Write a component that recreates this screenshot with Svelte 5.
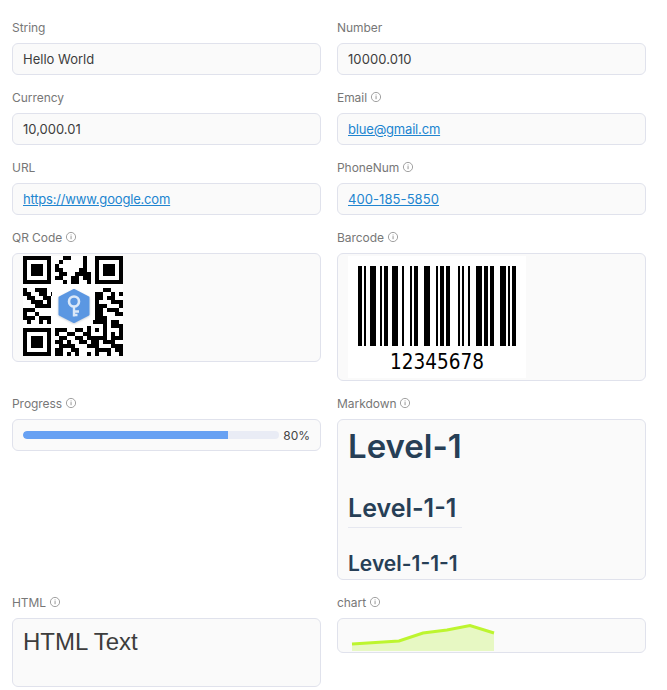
<script>
  // Code128-C: start, 12, 34, 56, 78, check 47, stop
  const patterns = ['211232','112232','131123','331121','241112','133121','2331112'];
  let bars = [];
  {
    let x = 10;
    for (const p of patterns) {
      [...p].forEach((ch, i) => {
        const w = Number(ch) * 2;
        if (i % 2 === 0) bars.push({ x, w });
        x += w;
      });
    }
  }
  const qrRows = [
    '#######...##...#..#######',
    '#.....#..#.....#..#.....#',
    '#.###.#.#......#..#.###.#',
    '#.###.#.##....##..#.###.#',
    '#.###.#..##..####.#.###.#',
    '#.....#.##..##.##.#.....#',
    '#######...#.##..#.#######',
    '.........................',
    '#..###..' + '.........' + '...##...',
    '##..##.#' + '.........' + '.##..#.#',
    '.##..##.' + '.........' + '.##.##..',
    '..###.#.' + '.........' + '.#...###',
    '...####.' + '.........' + '.###...#',
    '###.....' + '.........' + '.##.###.',
    '#..#....' + '.........' + '.##...##',
    '###.###.' + '.........' + '.###....',
    '.#..#.#.' + '........#' + '####.##.',
    '........' + '........#' + '...#.###',
    '#######.' + '###..##.#' + '.#.#...#',
    '#.....#.' + '#..##..##' + '...#.#.#',
    '#.###.#.' + '.##..##.#' + '####.###',
    '#.###.#.' + '##.#..##.' + '##.###..',
    '#.###.#.' + '.####...#' + '##...###',
    '#.....#.' + '##..##...' + '.####.##',
    '#######.' + '##.#.#..#' + '.#..#..#'
  ];
  const qrCells = [];
  qrRows.forEach((r, y) => [...r].forEach((c, x) => { if (c === '#') qrCells.push({ x, y }); }));
  const textRows = [
    [{ label: 'String', value: 'Hello World' }, { label: 'Number', value: '10000.010', kind: 'num' }],
    [{ label: 'Currency', value: '10,000.01' }, { label: 'Email', info: true, value: 'blue@gmail.cm', link: true, kind: 'tight' }],
    [{ label: 'URL', value: 'https://www.google.com', link: true, kind: 'tight' }, { label: 'PhoneNum', info: true, value: '400-185-5850', link: true, kind: 'num' }]
  ];
</script>

{#snippet info()}
  <svg class="info" viewBox="0 0 12 12" width="12" height="12" aria-hidden="true">
    <circle cx="6" cy="6" r="4.6" fill="none" stroke="currentColor" stroke-width="0.8" />
    <rect x="5.6" y="5.1" width="0.9" height="3.1" fill="currentColor" />
    <rect x="5.6" y="3.5" width="0.9" height="0.9" fill="currentColor" />
  </svg>
{/snippet}

<div class="form">
  {#each textRows as row}
    {#each row as f}
      <div class="item">
        <div class="label">{f.label}{#if f.info}{@render info()}{/if}</div>
        <div class="box text {f.kind ?? ''}">
          {#if f.link}<span class="link">{f.value}</span>{:else}{f.value}{/if}
        </div>
      </div>
    {/each}
  {/each}

  <div class="item">
    <div class="label">QR Code{@render info()}</div>
    <div class="box media qrbox">
      <div class="qr">
        <svg viewBox="0 0 25 25" width="100" height="100" shape-rendering="crispEdges">
          <rect width="25" height="25" fill="#fff" />
          {#each qrCells as c}<rect x={c.x} y={c.y} width="1" height="1" fill="#000" />{/each}
        </svg>
        <div class="logobg"></div>
        <svg class="logo" viewBox="0 0 36 38" width="36" height="38">
          <defs>
            <filter id="sh" x="-20%" y="-20%" width="140%" height="140%"><feGaussianBlur stdDeviation="0.8" /></filter>
          </defs>
          <path d="M18 3 L32.5 10.5 V27.5 L18 35 L3.5 27.5 V10.5 Z" fill="#9aa6b5" opacity="0.6" filter="url(#sh)" stroke="#9aa6b5" stroke-width="2" stroke-linejoin="round" transform="translate(0 0.8)" />
          <path d="M18 3 L32.5 10.5 V27.5 L18 35 L3.5 27.5 V10.5 Z" fill="#5b97e2" stroke="#5b97e2" stroke-width="2" stroke-linejoin="round" />
          <circle cx="18" cy="14.5" r="5" fill="none" stroke="#dbe8f8" stroke-width="2.6" />
          <path d="M18 19.5 V29.5 M18 24.5 H23 M18 28 H21.5" fill="none" stroke="#dbe8f8" stroke-width="2.4" />
        </svg>
      </div>
    </div>
  </div>

  <div class="item">
    <div class="label">Barcode{@render info()}</div>
    <div class="box media barbox">
      <svg class="barcode" viewBox="0 0 178 122" width="178" height="122" shape-rendering="crispEdges">
        <rect width="178" height="122" fill="#fff" />
        {#each bars as b}<rect x={b.x} y="10" width={b.w} height="80" fill="#000" />{/each}
        <text x="89" y="112.5" text-anchor="middle" class="bartext" shape-rendering="auto">12345678</text>
      </svg>
    </div>
  </div>

  <div class="item">
    <div class="label">Progress{@render info()}</div>
    <div class="box progress">
      <div class="track"><div class="fill" style="width: 80%"></div></div>
      <span class="pct">80%</span>
    </div>
  </div>

  <div class="item">
    <div class="label">Markdown{@render info()}</div>
    <div class="box markdown">
      <div class="md">
        <h1>Level-1</h1>
        <h2>Level-1-1</h2>
        <h3>Level-1-1-1</h3>
      </div>
    </div>
  </div>

  <div class="item">
    <div class="label">HTML{@render info()}</div>
    <div class="box html">HTML Text</div>
  </div>

  <div class="item">
    <div class="label">chart{@render info()}</div>
    <div class="box chart">
      <svg viewBox="0 0 142 27" width="142" height="27">
        <polygon points="0,19 47,16 71,8 95,5 118,0.5 142,8 142,26 0,26" fill="#e7f8c3" />
        <polyline points="0,19 47,16 71,8 95,5 118,0.5 142,8" fill="none" stroke="#bdf52f" stroke-width="3" />
      </svg>
    </div>
  </div>
</div>

<style>
  :global(body) {
    margin: 0;
    background: #fff;
    font-family: Inter, "Liberation Sans", sans-serif;
  }
  .form {
    display: grid;
    grid-template-columns: 309px 309px;
    column-gap: 16px;
    row-gap: 12px;
    align-items: start;
    padding: 17px 21px 0 12px;
  }
  .label {
    display: flex;
    align-items: center;
    gap: 3px;
    height: 20px;
    margin-bottom: 6px;
    font-size: 12px;
    letter-spacing: -0.05px;
    color: #777;
  }
  .info {
    color: #8a8a8a;
    margin-top: -1px;
  }
  .box {
    box-sizing: border-box;
    border: 1px solid #e0e2ec;
    border-radius: 6px;
    background: #fafafa;
    color: #3d3d3d;
    font-size: 13px;
  }
  .text {
    display: flex;
    align-items: center;
    height: 32px;
    padding: 0 10px;
  }
  .text.tight {
    letter-spacing: -0.18px;
  }
  .text.num {
    letter-spacing: 0.08px;
  }
  .link {
    color: #2185d0;
    text-decoration: underline;
  }
  .media {
    padding: 2px 10px 0;
  }
  .qrbox {
    height: 109px;
  }
  .barbox {
    height: 128px;
  }
  .qr {
    position: relative;
    width: 100px;
    height: 100px;
  }
  .qr svg {
    display: block;
  }
  .qr .logobg {
    position: absolute;
    left: 29px;
    top: 30px;
    width: 41px;
    height: 40px;
    background: #fff;
  }
  .qr .logo {
    position: absolute;
    left: 33px;
    top: 31px;
  }
  .barcode {
    display: block;
  }
  .bartext {
    font-family: "DejaVu Sans Condensed", "DejaVu Sans", sans-serif;
    font-stretch: condensed;
    font-size: 20.5px;
    fill: #000;
  }
  .progress {
    display: flex;
    align-items: center;
    gap: 4px;
    height: 32px;
    padding: 0 10px;
  }
  .track {
    flex: 1;
    height: 8px;
    border-radius: 4px;
    background: #e9ecf5;
    overflow: hidden;
  }
  .fill {
    height: 100%;
    background: #67a1f3;
    border-radius: 4px 0 0 4px;
  }
  .pct {
    width: 27px;
    text-align: right;
    font-size: 12px;
    color: #444;
  }
  .markdown {
    height: 161px;
    padding: 2px 10px 0;
    overflow: hidden;
  }
  .md {
    display: inline-block;
    color: #273f56;
  }
  h1, h2, h3 {
    margin: 0;
    font-weight: 600;
  }
  h1 {
    font-size: 33px;
    line-height: 48px;
    margin-bottom: 20px;
  }
  h2 {
    font-size: 25px;
    line-height: 36px;
    padding-bottom: 1px;
    border-bottom: 1px solid #e6e8f0;
    margin-bottom: 21px;
  }
  h3 {
    font-size: 21px;
    line-height: 30px;
  }
  .html {
    height: 69px;
    padding: 8px 10px;
    font-family: "Liberation Sans", sans-serif;
    font-size: 24px;
    line-height: 30px;
  }
  .chart {
    height: 35px;
    padding: 6px 14px 0;
  }
  .chart svg {
    display: block;
    overflow: visible;
  }
</style>
